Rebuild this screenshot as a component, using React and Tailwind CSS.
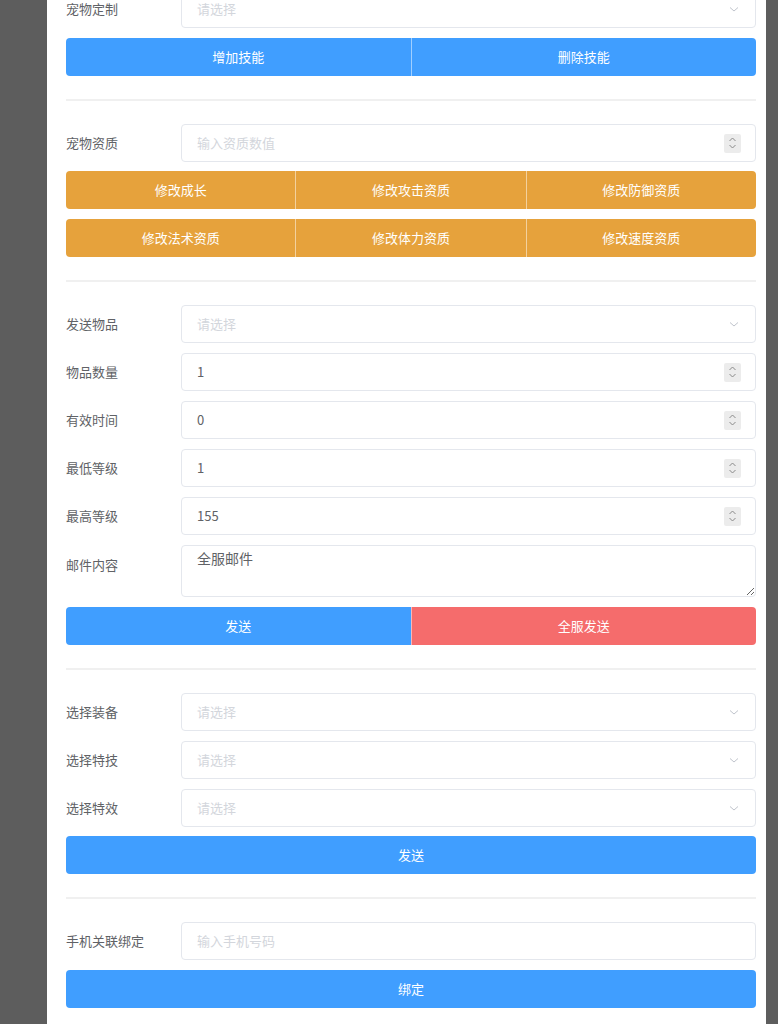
import React from "react";

const font = { fontFamily: '"Microsoft YaHei", "Noto Sans CJK SC", "Liberation Sans", sans-serif' };

function Chevron() {
  return (
    <svg width="12" height="12" viewBox="0 0 12 12" className="text-[#c0c4cc]">
      <path d="M2 4.5 L6 8 L10 4.5" fill="none" stroke="currentColor" strokeWidth="1" />
    </svg>
  );
}

function Spinner() {
  return (
    <div className="flex h-[19px] w-[17px] flex-col items-center justify-center rounded-[2px] bg-[#ececec]">
      <svg width="9" height="14" viewBox="0 0 9 14" className="text-[#8a8a8a]">
        <path d="M1.5 5 L4.5 2 L7.5 5" fill="none" stroke="currentColor" strokeWidth="1" />
        <path d="M1.5 9 L4.5 12 L7.5 9" fill="none" stroke="currentColor" strokeWidth="1" />
      </svg>
    </div>
  );
}

function Row({ label, children }) {
  return (
    <div className="flex items-center">
      <label className="w-[115px] shrink-0 text-[13px] text-[#606266]">{label}</label>
      <div className="flex-1">{children}</div>
    </div>
  );
}

function Select({ label }) {
  return (
    <Row label={label}>
      <div className="flex h-[38px] items-center justify-between rounded-[4px] border border-[#e4e7ed] px-[15px]">
        <span className="text-[13px] text-[#d3d6dc]">请选择</span>
        <Chevron />
      </div>
    </Row>
  );
}

function NumberInput({ label, value, placeholder }) {
  return (
    <Row label={label}>
      <div className="flex h-[38px] items-center justify-between rounded-[4px] border border-[#e4e7ed] pl-[15px] pr-[14px]">
        {value ? (
          <span className="text-[13px] text-[#606266]">{value}</span>
        ) : (
          <span className="text-[13px] text-[#d3d6dc]">{placeholder}</span>
        )}
        <Spinner />
      </div>
    </Row>
  );
}

function TextInput({ label, placeholder }) {
  return (
    <Row label={label}>
      <div className="flex h-[38px] items-center rounded-[4px] border border-[#e4e7ed] px-[15px]">
        <span className="text-[13px] text-[#d3d6dc]">{placeholder}</span>
      </div>
    </Row>
  );
}

function BtnGroup({ items, color }) {
  return (
    <div className="flex h-[38px] overflow-hidden rounded-[4px]">
      {items.map((it, i) => (
        <button
          key={i}
          className={`flex-1 text-[13px] text-white ${i > 0 ? "border-l border-white/50" : ""}`}
          style={{ backgroundColor: it.color || color }}
        >
          {it.text}
        </button>
      ))}
    </div>
  );
}

function Sep() {
  return <div className="my-[23px] h-[2px] bg-[#f0f0f0]" />;
}

export default function App() {
  return (
    <div className="flex min-h-[1024px] bg-[#5d5d5d]" style={font}>
      <div className="ml-[47px] mr-[12px] flex-1 overflow-hidden bg-white">
        <div className="-mt-[10px] px-[19px] pr-[10px]">
          <div className="flex flex-col gap-[10px]">
            <Select label="宠物定制" />
            <BtnGroup color="#409eff" items={[{ text: "增加技能" }, { text: "删除技能" }]} />
          </div>
          <Sep />
          <div className="flex flex-col gap-[10px]">
            <NumberInput label="宠物资质" placeholder="输入资质数值" />
            <div className="-mt-px">
              <BtnGroup color="#e6a23c" items={[{ text: "修改成长" }, { text: "修改攻击资质" }, { text: "修改防御资质" }]} />
            </div>
            <BtnGroup color="#e6a23c" items={[{ text: "修改法术资质" }, { text: "修改体力资质" }, { text: "修改速度资质" }]} />
          </div>
          <Sep />
          <div className="flex flex-col gap-[10px]">
            <Select label="发送物品" />
            <NumberInput label="物品数量" value="1" />
            <NumberInput label="有效时间" value="0" />
            <NumberInput label="最低等级" value="1" />
            <NumberInput label="最高等级" value="155" />
            <div className="flex items-start">
              <label className="w-[115px] shrink-0 pt-[10px] text-[13px] text-[#606266]">邮件内容</label>
              <textarea
                defaultValue="全服邮件"
                className="block h-[52px] flex-1 resize-y rounded-[4px] border border-[#e4e7ed] px-[15px] py-[2px] text-[14px] text-[#606266] outline-none"
                style={font}
              />
            </div>
            <BtnGroup items={[{ text: "发送", color: "#409eff" }, { text: "全服发送", color: "#f56c6c" }]} />
          </div>
          <Sep />
          <div className="flex flex-col gap-[10px]">
            <Select label="选择装备" />
            <Select label="选择特技" />
            <Select label="选择特效" />
            <div className="-mt-px">
              <BtnGroup color="#409eff" items={[{ text: "发送" }]} />
            </div>
          </div>
          <Sep />
          <div className="flex flex-col gap-[10px]">
            <TextInput label="手机关联绑定" placeholder="输入手机号码" />
            <BtnGroup color="#409eff" items={[{ text: "绑定" }]} />
          </div>
          <div className="h-[20px]" />
        </div>
      </div>
    </div>
  );
}
